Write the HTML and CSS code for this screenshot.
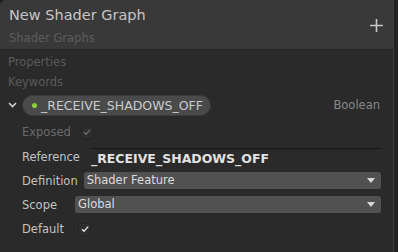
FILE: index.html
```html
<!DOCTYPE html>
<html lang="en">
<head>
    <meta charset="UTF-8">
    <title>Shader Graph Blackboard</title>
    <link rel="stylesheet" href="styles.css">
</head>
<body>
    <div class="panel">
        <div class="header">
            <div class="titles">
                <div class="title">New Shader Graph</div>
                <div class="subtitle">Shader Graphs</div>
            </div>
            <svg class="add" width="13" height="13" viewBox="0 0 13 13">
                <path d="M6.5 0v13M0 6.5h13" stroke="#c8c8c8" stroke-width="1.6"/>
            </svg>
        </div>

        <div class="body">
            <div class="section">Properties</div>
            <div class="section">Keywords</div>

            <div class="keyword-row">
                <svg class="chevron" width="9" height="6" viewBox="0 0 9 6">
                    <path d="M1 1l3.5 3.5L8 1" stroke="#d0d0d0" stroke-width="1.6" fill="none"/>
                </svg>
                <div class="pill">
                    <span class="dot"></span>
                    <span>_RECEIVE_SHADOWS_OFF</span>
                </div>
                <span class="type">Boolean</span>
            </div>

            <div class="fields">
                <div class="field disabled">
                    <span class="label">Exposed</span>
                    <span class="check">
                        <svg width="10" height="10" viewBox="0 0 10 10"><path d="M2 5.2l2 2L8.2 2.6" stroke="#6c6c6c" stroke-width="1.3" fill="none"/></svg>
                    </span>
                </div>
                <div class="field tall">
                    <span class="label">Reference</span>
                    <span class="ref">_RECEIVE_SHADOWS_OFF</span>
                </div>
                <div class="field short">
                    <span class="label">Definition</span>
                    <div class="dropdown def">Shader Feature<span class="arrow"></span></div>
                </div>
                <div class="field tall">
                    <span class="label">Scope</span>
                    <div class="dropdown scope">Global<span class="arrow"></span></div>
                </div>
                <div class="field">
                    <span class="label">Default</span>
                    <span class="check on">
                        <svg width="10" height="10" viewBox="0 0 10 10"><path d="M2 5.2l2 2L8.2 2.6" stroke="#e6e6e6" stroke-width="1.3" fill="none"/></svg>
                    </span>
                </div>
            </div>
        </div>
    </div>
</body>
</html>
```

FILE: styles.css
```css
body {
    margin: 0;
    padding: 0;
    width: 398px;
    height: 252px;
    overflow: hidden;
    background: #222;
    font-family: 'DejaVu Sans', sans-serif;
}

.panel {
    width: 393px;
    height: 252px;
    background: #2a2a2a;
    border-top-left-radius: 6px;
    border-right: 1px solid #3c3c3c;
    overflow: hidden;
    display: flex;
    flex-direction: column;
}

.header {
    height: 50px;
    background: #393939;
    border-bottom: 1px solid #232323;
    display: flex;
    justify-content: space-between;
    align-items: center;
    padding: 0 10px 0 9px;
    box-sizing: border-box;
}

.title {
    font-size: 14.5px;
    color: #c6c6c6;
    margin-top: 2px;
}

.subtitle {
    font-size: 11.5px;
    color: #5c5c5c;
    margin-top: 8px;
}

.add {
    margin-top: 2px;
}

.body {
    padding: 2px 0 0 0;
}

.section {
    font-size: 11.5px;
    color: #5a5a5a;
    height: 20px;
    line-height: 20px;
    padding-left: 8px;
}

.keyword-row {
    display: flex;
    align-items: center;
    height: 22px;
    margin-top: 2px;
    padding-left: 8px;
    padding-right: 13px;
}

.chevron {
    margin-right: 5px;
}

.pill {
    display: flex;
    align-items: center;
    background: #4a4a4a;
    border: 1px solid #3a3a3a;
    border-radius: 11px;
    height: 21px;
    width: 189px;
    box-sizing: border-box;
    font-size: 12.5px;
    color: #cbcbcb;
    padding-left: 9px;
}

.dot {
    width: 5px;
    height: 5px;
    border-radius: 50%;
    background: #8ccf3a;
    margin-right: 4px;
}

.type {
    margin-left: auto;
    font-size: 11.5px;
    color: #888;
}

.fields {
    padding-left: 22px;
    padding-right: 12px;
    margin-top: 4px;
}

.field {
    display: flex;
    align-items: center;
    height: 24px;
    font-size: 11.5px;
    color: #c2c2c2;
}

.field.tall {
    height: 25px;
}

.field.short {
    height: 23px;
}

.field.disabled {
    color: #6a6a6a;
}

.label {
    flex: none;
}

.check {
    width: 13px;
    height: 13px;
    box-sizing: border-box;
    border: 1px solid #232323;
    background: #2e2e2e;
    border-radius: 2px;
    display: flex;
    align-items: center;
    justify-content: center;
    margin-left: 10px;
}

.check.on {
    margin-left: 14px;
}

.ref {
    flex: 1;
    margin-left: 11px;
    border-top: 1px solid #151515;
    padding-top: 2px;
    font-weight: bold;
    font-size: 12.5px;
    color: #e2e2e2;
}

.dropdown {
    flex: 1;
    position: relative;
    height: 17px;
    line-height: 17px;
    background: #515151;
    border-radius: 3px;
    color: #dcdcdc;
    font-size: 11.5px;
    padding-left: 3px;
}

.dropdown.def {
    margin-left: 6px;
}

.dropdown.scope {
    margin-left: 18px;
}

.arrow {
    position: absolute;
    right: 6px;
    top: 6px;
    border-left: 4px solid transparent;
    border-right: 4px solid transparent;
    border-top: 5px solid #d8d8d8;
}
```
